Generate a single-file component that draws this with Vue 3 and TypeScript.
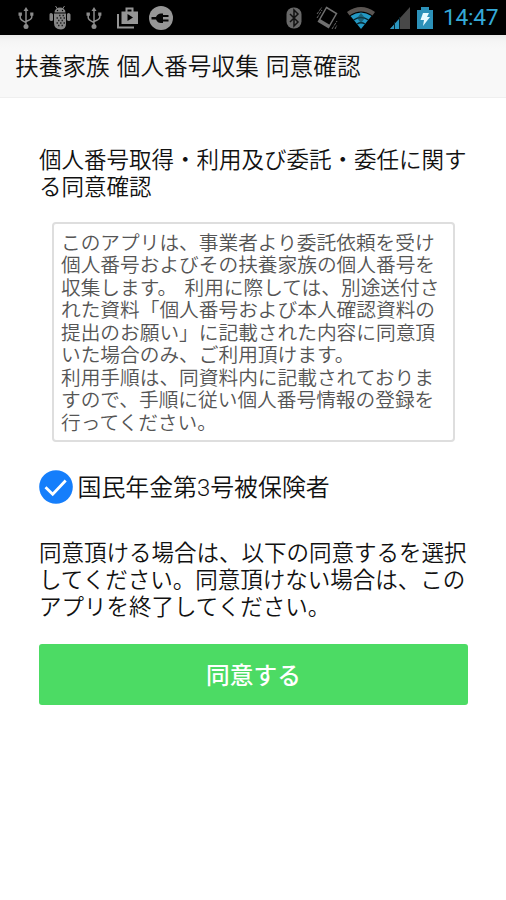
<script setup lang="ts">
import { ref } from 'vue'

const insured = ref<boolean>(true)

const heading: string[] = ['個人番号取得・利用及び委託・委任に関す', 'る同意確認']

const terms: string[] = [
  'このアプリは、事業者より委託依頼を受け',
  '個人番号およびその扶養家族の個人番号を',
  '収集します。 利用に際しては、別途送付さ',
  'れた資料「個人番号および本人確認資料の',
  '提出のお願い」に記載された内容に同意頂',
  'いた場合のみ、ご利用頂けます。',
  '利用手順は、同資料内に記載されておりま',
  'すので、手順に従い個人番号情報の登録を',
  '行ってください。',
]

const notice: string[] = [
  '同意頂ける場合は、以下の同意するを選択',
  'してください。同意頂けない場合は、この',
  'アプリを終了してください。',
]
</script>

<template>
  <div class="screen">
    <div class="status">
      <div class="left">
        <svg class="usb" viewBox="0 0 16 24" width="16" height="24">
          <g fill="none" stroke="#8b8b8b" stroke-width="1.5">
            <path d="M8 3v17M2.200 8v3.500q0 2.500 5.800 5M13.800 8v3q0 2.500-5.800 4.500" />
          </g>
          <path d="M8 1l2.500 4h-5zM.5 6.500h3.400v3.200H.5zM12.200 6.500h3.200v3.200h-3.200z" fill="#8b8b8b" />
          <circle cx="8" cy="20.500" r="2.500" fill="#8b8b8b" />
        </svg>
        <svg class="droid" viewBox="0 0 22 24" width="22" height="24">
          <path d="M5.500 6.500a5.500 5 0 0 1 11 0zM5 7.500h12V18q0 5-5 5.500Q5 23 5 17zM.5 8.500q0-1.500 1.500-1.500T4 8.500V14q0 1-1.500 1T.5 14zM18 8.500q0-1.500 1.500-1.500t2 1.500V14q0 1-1.500 1T18 14z" fill="#858585" />
          <path d="M6.500 0l2 3M15.500 0l-2 3" stroke="#858585" />
          <path d="M10 9.500h1.500m2 0H15M7.500 12H9m2 0h1.500m2 0H16M9 14.500h1.500m2 0H14M7.500 17H9m2 0h1.500m2 0H16M9 19.500h1.500m2 0H14" stroke="#222" stroke-width="1.400" />
          <circle cx="8.500" cy="4.500" r=".7" /><circle cx="13.500" cy="4.500" r=".7" />
        </svg>
        <svg class="usb second" viewBox="0 0 16 24" width="16" height="24">
          <g fill="none" stroke="#8b8b8b" stroke-width="1.5">
            <path d="M8 3v17M2.200 8v3.500q0 2.500 5.800 5M13.800 8v3q0 2.500-5.800 4.500" />
          </g>
          <path d="M8 1l2.500 4h-5zM.5 6.500h3.400v3.200H.5zM12.200 6.500h3.200v3.200h-3.200z" fill="#8b8b8b" />
          <circle cx="8" cy="20.500" r="2.500" fill="#8b8b8b" />
        </svg>
        <svg class="bag" viewBox="0 0 22 22" width="22" height="22">
          <path d="M1 7v13.500h16" fill="none" stroke="#959595" stroke-width="2" />
          <path d="M9.500 5V1.500h6V5" fill="none" stroke="#959595" stroke-width="2" />
          <path fill-rule="evenodd" d="M4.500 4.500H21V17H4.500zM10.500 7v7l5.500-3.500z" fill="#959595" />
        </svg>
        <svg class="plug" viewBox="0 0 24 24" width="24" height="24">
          <circle cx="12" cy="12" r="12" fill="#969696" />
          <path d="M2.500 11H7q1.500-3.500 5-3.500h2v1.500h5.500v2H14v2.500h5.500v2H14V17h-2q-3.500 0-5-3.500H2.500z" fill="#050505" />
        </svg>
      </div>
      <div class="right">
        <svg class="bt" viewBox="0 0 16 22" width="16" height="22">
          <rect x=".5" y=".5" width="15" height="21" rx="7" fill="#686868" />
          <path d="M4 7l8 8-4 4V3l4 4-8 8" fill="none" stroke="#111" stroke-width="1.500" />
        </svg>
        <svg class="vibrate" viewBox="0 0 22 24" width="22" height="24">
          <path d="M10.500 1.500L20.500 7.500 12.500 21.500 2.500 15.500z" fill="none" stroke="#707070" stroke-width="1.500" />
          <path d="M2.500 15.500l10 6 1.500-2.500-10-6z" fill="#707070" />
          <path d="M1 8l5-7M1 12l5-8M16 23l5-8M19 23l2-4" stroke="#666" stroke-dasharray="3 1" />
        </svg>
        <svg class="wifi" viewBox="0 0 28 22" width="28" height="22">
          <path d="M0 5q14-10 28 0l-2.500 3.500q-11.500-8-23 0z" fill="#5a5552" />
          <path d="M3.500 9q10.500-7 21 0L14 22z" fill="#2499c4" />
          <path d="M6.500 13q7.500-5 15 0M10 17q4-2.500 8 0" fill="none" stroke="#07232d" stroke-width="1.300" />
          <path d="M14 6l4 5-4 5-4-5z" fill="#174654" opacity=".65" />
        </svg>
        <svg class="signal" viewBox="0 0 20 22" width="20" height="22">
          <path d="M0 22L20 0v22z" fill="#484848" />
          <path d="M0 22L10 11v11z" fill="#2b96c0" />
          <path d="M4.500 15v7M9.500 10v12" stroke="#07232d" />
        </svg>
        <svg class="battery" viewBox="0 0 16 22" width="16" height="22">
          <path d="M4 0h8v3h4v19H0V3h4z" fill="#2c91b9" />
          <path d="M6 6h6l-2 4h3l-7 9 1-6H3.500z" fill="#e7faff" />
        </svg>
        <span class="clock">14:47</span>
      </div>
    </div>

    <header class="bar"><h1>扶養家族 個人番号収集 同意確認</h1></header>

    <main>
      <h2><span v-for="line in heading" :key="line">{{ line }}</span></h2>
      <div class="terms"><span v-for="line in terms" :key="line">{{ line }}</span></div>
      <label class="choice">
        <input v-model="insured" type="checkbox" />
        <svg viewBox="0 0 34 34" width="34" height="34">
          <circle cx="17" cy="17" r="16.800" :fill="insured ? '#157efb' : '#c7c7cc'" />
          <path d="M6.500 17.300l7.200 7L26.700 10.500" fill="none" stroke="#fff" stroke-width="2.800" />
        </svg>
        <span>国民年金第3号被保険者</span>
      </label>
      <p class="notice"><span v-for="line in notice" :key="line">{{ line }}</span></p>
      <button type="button">同意する</button>
    </main>
  </div>
</template>

<style>
body {
  margin: 0;
  background: #fff;
}
</style>

<style scoped>
.screen {
  width: 506px;
  height: 900px;
  overflow: hidden;
  background: #fff;
  color: #111;
  font-family: Roboto, "Noto Sans CJK JP", sans-serif;
  font-weight: 350;
}
.status {
  display: flex;
  justify-content: space-between;
  height: 35px;
  background: #000;
}
.left,
.right {
  display: flex;
  align-items: center;
  height: 36px;
}
.left {
  padding-left: 18px;
}
.droid {
  margin-left: 15px;
}
.second {
  margin-left: 15px;
}
.bag {
  margin-left: 15px;
}
.plug {
  margin-left: 10px;
}
.right {
  padding-right: 8px;
}
.vibrate {
  margin-left: 14px;
}
.wifi {
  margin-left: 9px;
}
.signal {
  margin-left: 15px;
}
.battery {
  margin-left: 7px;
}
.clock {
  width: 55px;
  margin-left: 10px;
  color: #35a9d7;
  font: 400 22.8px/36px Roboto, sans-serif;
  letter-spacing: -0.3px;
  white-space: nowrap;
}
.bar {
  box-sizing: border-box;
  height: 63px;
  padding: 1px 0 0 15px;
  border-bottom: 1px solid #efefef;
  background: linear-gradient(#e9e9e9, #f5f5f5 6px, #f8f8f8 14px);
}
h1 {
  margin: 0;
  font-size: 23.7px;
  font-weight: inherit;
  line-height: 62px;
  word-spacing: 1.2px;
  white-space: nowrap;
}
main {
  padding: 49px 38px 0 39px;
}
h2 span,
.terms span,
.notice span {
  display: block;
  white-space: nowrap;
}
h2 {
  margin: 0;
  font-size: 22.5px;
  font-weight: inherit;
  line-height: 27px;
}
.terms {
  box-sizing: border-box;
  width: 403px;
  height: 220px;
  margin: 21px 0 0 13px;
  padding: 8.5px 0 0 7px;
  border: 2px solid #dedede;
  border-radius: 4px;
  color: #555;
  font-size: 19.7px;
  line-height: 22.5px;
  word-spacing: 2.5px;
}
.choice {
  display: flex;
  align-items: center;
  height: 34px;
  margin-top: 28px;
  font-size: 23.9px;
  line-height: 34px;
}
.choice input {
  position: absolute;
  opacity: 0;
  pointer-events: none;
}
.choice span {
  margin-left: 5px;
  padding-top: 2px;
  white-space: nowrap;
}
.choice svg {
  margin-left: -0.5px;
}
.notice {
  margin: 36px 0 0;
  font-size: 22.5px;
  line-height: 27px;
}
button {
  display: block;
  width: 100%;
  height: 61px;
  margin-top: 22.5px;
  padding: 0;
  border: 0;
  border-radius: 3px;
  background: #4cdb64;
  color: #fff;
  font: 500 23.7px/61px "Noto Sans CJK JP", sans-serif;
}
</style>
